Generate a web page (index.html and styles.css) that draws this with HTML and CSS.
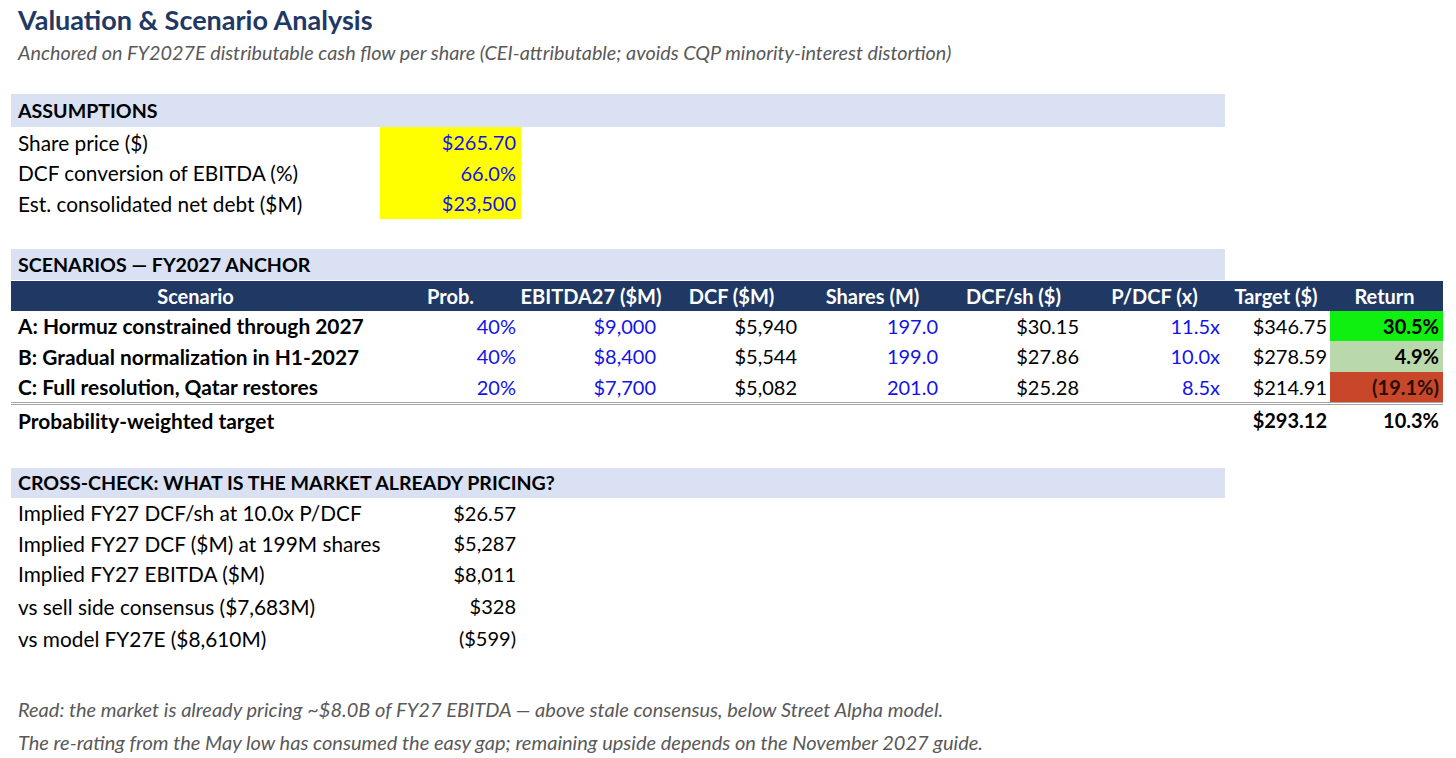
FILE: index.html
```html
<!DOCTYPE html>
<html lang="en">
<head>
<meta charset="utf-8">
<title>Valuation &amp; Scenario Analysis</title>
<link rel="stylesheet" href="styles.css">
</head>
<body>
<div class="sheet">
  <h1 class="title">Valuation &amp; Scenario Analysis</h1>
  <p class="subtitle">Anchored on FY2027E distributable cash flow per share (CEI-attributable; avoids CQP minority-interest distortion)</p>

  <section class="block assumptions">
    <div class="band">ASSUMPTIONS</div>
    <div class="kv">
      <div class="row"><span class="lbl">Share price ($)</span><span class="val input hl">$265.70</span></div>
      <div class="row"><span class="lbl">DCF conversion of EBITDA (%)</span><span class="val input hl">66.0%</span></div>
      <div class="row"><span class="lbl">Est. consolidated net debt ($M)</span><span class="val input hl">$23,500</span></div>
    </div>
  </section>

  <section class="block scenarios">
    <div class="band">SCENARIOS — FY2027 ANCHOR</div>
    <div class="grid head">
      <span>Scenario</span><span>Prob.</span><span>EBITDA27 ($M)</span><span>DCF ($M)</span><span>Shares (M)</span><span>DCF/sh ($)</span><span>P/DCF (x)</span><span>Target ($)</span><span>Return</span>
    </div>
    <div class="grid body">
      <span class="name">A: Hormuz constrained through 2027</span><span class="input">40%</span><span class="input">$9,000</span><span>$5,940</span><span class="input">197.0</span><span>$30.15</span><span class="input">11.5x</span><span>$346.75</span><span class="ret up">30.5%</span>
    </div>
    <div class="grid body">
      <span class="name">B: Gradual normalization in H1-2027</span><span class="input">40%</span><span class="input">$8,400</span><span>$5,544</span><span class="input">199.0</span><span>$27.86</span><span class="input">10.0x</span><span>$278.59</span><span class="ret mid">4.9%</span>
    </div>
    <div class="grid body last">
      <span class="name">C: Full resolution, Qatar restores</span><span class="input">20%</span><span class="input">$7,700</span><span>$5,082</span><span class="input">201.0</span><span>$25.28</span><span class="input">8.5x</span><span>$214.91</span><span class="ret down">(19.1%)</span>
    </div>
    <div class="grid body total">
      <span class="name">Probability-weighted target</span><span></span><span></span><span></span><span></span><span></span><span></span><span class="b">$293.12</span><span class="b">10.3%</span>
    </div>
  </section>

  <section class="block cross">
    <div class="band">CROSS-CHECK: WHAT IS THE MARKET ALREADY PRICING?</div>
    <div class="kv">
      <div class="row"><span class="lbl">Implied FY27 DCF/sh at 10.0x P/DCF</span><span class="val">$26.57</span></div>
      <div class="row"><span class="lbl">Implied FY27 DCF ($M) at 199M shares</span><span class="val">$5,287</span></div>
      <div class="row"><span class="lbl">Implied FY27 EBITDA ($M)</span><span class="val">$8,011</span></div>
      <div class="row tall"><span class="lbl">vs sell side consensus ($7,683M)</span><span class="val">$328</span></div>
      <div class="row"><span class="lbl">vs model FY27E ($8,610M)</span><span class="val">($599)</span></div>
    </div>
  </section>

  <div class="notes">
    <p>Read: the market is already pricing ~$8.0B of FY27 EBITDA — above stale consensus, below Street Alpha model.</p>
    <p>The re-rating from the May low has consumed the easy gap; remaining upside depends on the November 2027 guide.</p>
  </div>
</div>
</body>
</html>
```

FILE: styles.css
```css
* { box-sizing: border-box; }
html, body { margin: 0; padding: 0; background: #ffffff; }
body {
  font-family: Lato, "Open Sans", "Liberation Sans", sans-serif;
  color: #000;
  font-size: 20px;
}
.sheet {
  width: 1456px;
  height: 758px;
  padding: 0 0 0 11px;
  overflow: hidden;
}
.title {
  margin: 0;
  height: 40px;
  line-height: 40px;
  padding-left: 7px;
  font-size: 27px;
  font-weight: 700;
  color: #1f3864;
}
.subtitle {
  margin: 0;
  height: 25px;
  line-height: 25px;
  padding-left: 7px;
  font-size: 19.8px;
  font-style: italic;
  color: #595959;
}
.block { width: 1432px; }
.assumptions { margin-top: 29px; }
.scenarios { margin-top: 30px; }
.cross { margin-top: 32px; }

.band {
  width: 1214px;
  background: #d9e1f2;
  font-weight: 700;
  font-size: 19.6px;
  padding-left: 7px;
  display: flex;
  align-items: center;
}
.assumptions .band { height: 33px; }
.scenarios .band { height: 31px; }
.cross .band { height: 30px; }

.kv .row {
  display: grid;
  grid-template-columns: 369px 141px;
  height: 30.5px;
}
.kv .row.tall { height: 34px; }
.kv .lbl { padding-left: 7px; display: flex; align-items: center; white-space: nowrap; font-size: 20.8px; }
.kv .val { display: flex; align-items: center; justify-content: flex-end; padding-right: 5px; }
.hl { background: #ffff00; }
.input { color: #1414e6; }

.grid {
  display: grid;
  grid-template-columns: 369px 141px 140px 141px 141px 141px 141px 105px 113px;
  width: 1432px;
}
.grid > span {
  display: flex;
  align-items: center;
  justify-content: flex-end;
  padding-right: 5px;
  white-space: nowrap;
}
.grid.head {
  background: #1f3864;
  color: #fff;
  font-weight: 700;
  height: 30px;
  margin-top: 1px;
}
.grid.head > span { justify-content: center; padding-right: 0; }
.grid.body { height: 30.5px; }
.grid.body > span.name { justify-content: flex-start; padding-left: 7px; font-weight: 700; font-size: 20.9px; }
.grid.body.last { border-bottom: 3px double #a6a6a6; height: 33px; }
.grid.body.total { height: 31px; }
.grid > span:nth-child(8) { padding-right: 3px; }
.grid > span:nth-child(9) { padding-right: 4px; }
.ret { font-weight: 700; }
.ret.up { background: #10f010; }
.ret.mid { background: #b9d9ac; }
.ret.down { background: #c8472a; color: #2a0d05; }
.b { font-weight: 700; }

.notes { margin-top: 39px; }
.notes p {
  margin: 0;
  padding-left: 7px;
  height: 33px;
  line-height: 33px;
  font-size: 20px;
  font-style: italic;
  color: #595959;
}
```
